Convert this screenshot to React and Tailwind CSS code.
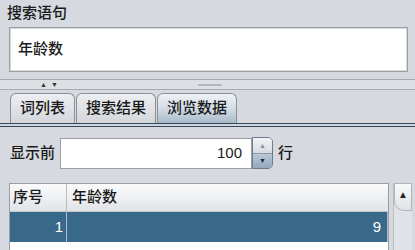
import React from 'react';

const font = { fontFamily: '"Liberation Sans", "Noto Sans CJK SC", sans-serif' };

function Tab({ label, active }) {
  return (
    <div
      className={`h-[30px] px-[9px] flex items-center border border-b-0 border-[#8c8f94] rounded-t-[6px] text-[15px] font-medium text-[#1a1a1a] ${
        active
          ? 'bg-gradient-to-b from-[#eef2f6] via-[#d3dce6] to-[#a9bacb]'
          : 'bg-gradient-to-b from-[#eceef1] to-[#d3d6db]'
      }`}
    >
      {label}
    </div>
  );
}

export default function App() {
  return (
    <div className="w-[415px] h-[250px] bg-[#d6d9df] overflow-hidden flex flex-col text-[#1a1a1a]" style={font}>
      {/* search statement */}
      <div className="h-[27px] pl-[7px] pt-[2px] text-[15px] font-medium leading-[22px]">搜索语句</div>
      <div className="ml-[9px] mr-[7px] h-[45px] border border-[#9c9ea3] bg-white shadow-[inset_0_0_0_1px_#d8dade] flex items-center pl-[8px] text-[15px] font-medium">
        年龄数
      </div>

      {/* split pane divider */}
      <div className="mt-[7px] h-[11px] border-t border-b border-[#a6a9ae] bg-[#dcdfe4] flex items-center relative">
        <div className="ml-[40px] flex gap-[4px] text-[7px] leading-none text-[#333]">
          <span>▲</span>
          <span>▼</span>
        </div>
        <div className="absolute left-[198px] top-[4px] w-[24px] h-[2px] bg-[#b3b6bb] rounded-full" />
      </div>

      {/* tabs */}
      <div className="mt-[3px] flex pl-[10px] gap-[1px]">
        <Tab label="词列表" />
        <Tab label="搜索结果" />
        <Tab label="浏览数据" active />
      </div>
      <div className="h-[4px] border-t border-b border-[#3c4654] bg-[#c9d6e3]" />

      {/* content */}
      <div className="flex items-center mt-[10px] h-[32px]">
        <span className="ml-[10px] w-[50px] text-[15px] font-medium">显示前</span>
        <div className="w-[192px] h-[31px] bg-white border border-[#9c9ea3] flex items-center justify-end pr-[9px] text-[15px]">
          100
        </div>
        <div className="w-[21px] h-[32px] border border-[#6f7b89] rounded-r-[5px] flex flex-col overflow-hidden">
          <div className="flex-1 bg-gradient-to-b from-[#f2f4f6] to-[#d7dbe0] flex items-center justify-center text-[7px] text-[#8a8f96] leading-none">
            ▲
          </div>
          <div className="h-px bg-[#8d99a6]" />
          <div className="flex-1 bg-gradient-to-b from-[#b9c8d6] to-[#93a8bd] flex items-center justify-center text-[7px] text-[#1d2a38] leading-none">
            ▼
          </div>
        </div>
        <span className="ml-[5px] text-[15px] font-medium">行</span>
      </div>

      {/* table */}
      <div className="mt-[14px] flex flex-1">
        <div className="ml-[9px] w-[380px] border-t border-l border-r border-[#9c9ea3] bg-white flex flex-col">
          <div className="h-[28px] flex bg-gradient-to-b from-[#fbfbfc] to-[#e1e4e8] border-b border-[#c4c7cc] text-[15px] font-medium">
            <div className="w-[57px] pl-[3px] flex items-center border-r border-[#b8bbc0]">序号</div>
            <div className="flex-1 pl-[5px] flex items-center">年龄数</div>
          </div>
          <div className="h-[30px] flex bg-[#39698a] text-white text-[15px]">
            <div className="w-[57px] pr-[3px] flex items-center justify-end border-r border-[#a7c0d6]">1</div>
            <div className="flex-1 pr-[6px] flex items-center justify-end border-r border-[#a7c0d6]">9</div>
          </div>
        </div>
        <div className="ml-[4px] w-[19px] bg-[#dfe2e6] border-l border-[#b8bbc0] flex flex-col">
          <div className="h-[28px] bg-gradient-to-b from-[#f7f8f9] to-[#e0e3e7] border border-[#b0b3b8] rounded-bl-[10px] flex justify-center pt-[6px] text-[10px] leading-none text-[#222]">
            ▲
          </div>
        </div>
      </div>
    </div>
  );
}
